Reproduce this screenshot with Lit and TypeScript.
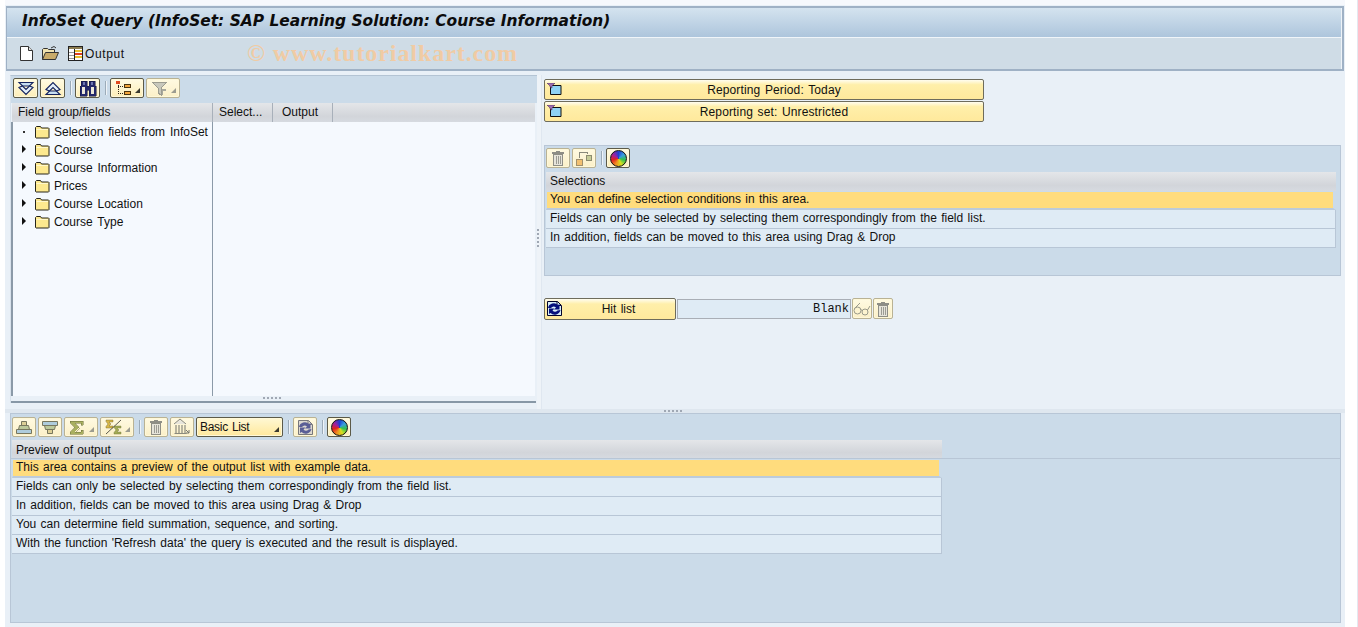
import { LitElement, html, css, svg } from "lit";
import { customElement } from "lit/decorators.js";

const ic = (w: number, h: number, body: unknown, cls = "") =>
  html`<svg class="ic ${cls}" width=${w} height=${h} viewBox="0 0 ${w} ${h}" shape-rendering="crispEdges">${body}</svg>`;

const folder = () => html`<svg class="ic" width="16" height="14" viewBox="0 0 16 14">
  <path d="M1.500 12.500V2.500l1-1h4l1 1.500h7l.5.5v9l-.5.5h-12.500z" fill="#fde98f" stroke="#26241a" stroke-width="1"/>
  <path d="M2.500 4.500h11.500" stroke="#fff8cc" stroke-width="1"/></svg>`;

const trash = () => ic(16, 16, svg`
  <path d="M2 3h12" stroke="#8e8e86" stroke-width="2"/>
  <path d="M6 1h4v1H6z" fill="#8e8e86"/>
  <path d="M3.500 4.500h9v10.500h-9z" fill="#e6e4da" stroke="#8e8e86"/>
  <path d="M6 6v8M8 6v8M10 6v8" stroke="#9c9c94"/>`);

const wheel = () => html`<span class="wheel"></span>`;

const expand = (up: boolean) => html`<svg class="ic" width="18" height="15" viewBox="0 0 18 15">
  <g transform=${up ? "translate(0 15) scale(1 -1)" : ""} fill="#c8dff2" stroke="#14235e" stroke-width="1.100">
    <path d="M2 1.500h14l-3.500 3.500h-7z"/>
    <path d="M2 6.500l7 7 7-7-3.500-1.500-3.500 3.500-3.500-3.500z" fill="#e4effa"/>
  </g></svg>`;

const binoc = () => ic(18, 17, svg`
  <path d="M2 1h6v5h2V1h6v5h1v10h-7V10H8v6H1V6h1z" fill="#23286a" stroke="#10123a" stroke-width="0.500"/>
  <path d="M3 7h3v7H3zM12 7h3v7h-3z" fill="#ece8d8"/>
  <path d="M4 2h2v3H4zM12 2h2v3h-2z" fill="#6c74b0"/>`);

const tree = () => ic(18, 15, svg`
  <path d="M3 2v11M3 5h7M3 12h7" stroke="#30261a" stroke-dasharray="1 1" fill="none"/>
  <path d="M1 0h4v3H1z" fill="#e04a20"/>
  <path d="M9.500 3.500h6v3h-6zM9.500 10.500h6v3h-6z" fill="#f4a63a" stroke="#4a3410"/>`);

const funnel = () => ic(18, 15, svg`
  <path d="M1 1h15l-6 6v7l-3-2V7z" fill="#c8c8bc" stroke="#9c9c90"/>
  <path d="M11 8h4v2h-4zM11 8h1v6h-1z" fill="#a8a89c"/>`);

const moveIc = () => ic(18, 16, svg`
  <path d="M1.500 9.500h6v6h-6z" fill="#f2c070" stroke="#a0906c"/>
  <path d="M11.500 5.500h5v5h-5z" fill="#c6cc98" stroke="#8c8c70"/>
  <path d="M4 8V2h8v2" stroke="#8a8a7c" fill="none"/>`);

const report = () => html`<svg class="ic rep" width="15" height="12" viewBox="0 0 15 12">
  <path d="M3.500 2.500h10.500v9H3.500z" fill="#8fd2f4" stroke="#111"/>
  <path d="M0 0h8L5 3v2L3 4V3z" fill="#9c6cb0" stroke="#3c2048" stroke-width="0.500"/></svg>`;

const refresh = (dim = false) => {
  const dark = dim ? "#5a5e96" : "#06107c";
  const paper = dim ? "#ddd9d0" : "#d8eef8";
  const line = dim ? "#77777c" : "#03032c";
  return html`<svg class="ic" width="17" height="17" viewBox="0 0 17 17">
    <path d="M1.500 1.500h10l4 4v10h-14z" fill=${paper} stroke=${line}/>
    <path d="M11 1.500v4h4" fill="none" stroke=${line}/>
    <path d="M2 8a6 6 0 0 1 10-3l1.500-1v5.500H8l2-2a3.500 3.500 0 0 0-5 .5z" fill=${dark}/>
    <path d="M14.500 10a6 6 0 0 1-10 3L3 14V8.500h5.500l-2 2a3.500 3.500 0 0 0 5 0z" fill=${dark}/>
  </svg>`;
};

const stack = (flip: boolean) => html`<svg class="ic" width="16" height="15" viewBox="0 0 16 15">
  <g transform=${flip ? "translate(0 15) scale(1 -1)" : ""} stroke="#77775e">
    <path d="M5.500 1.500h5v4h-5z" fill="#dccf96"/>
    <path d="M3.500 5.500h9l1 4h-11z" fill="#bcc99a"/>
    <path d="M.500 9.500h15v4H.500z" fill="#aeccdc"/>
  </g></svg>`;

const sigma = () => ic(16, 15, svg`
  <path d="M1 1h13v4h-2V3H6l4 4.500L6 12h6v-2h2v4H1v-2l5-4.500L1 3z" fill="#a9b060" stroke="#6a6e3c" stroke-width="0.500"/>`);

const sigma2 = () => html`<svg class="ic" width="17" height="16" viewBox="0 0 17 16">
  <path d="M1 1h7v2H4l2 2-2 2h4v2H1V7.500L3 5 1 2.500z" fill="#d8b848" stroke="#6a5a2c" stroke-width=".4"/>
  <path d="M9 7h7v2h-4l2 2-2 2h4v2H9v-1.500l2-2.500-2-2.500z" fill="#a4ac54" stroke="#6a6e3c" stroke-width=".4"/>
  <path d="M1 15L16 1" stroke="#5c5c50" stroke-width="1"/></svg>`;

const layoutIc = () => html`<svg class="ic" width="18" height="18" viewBox="0 0 18 18">
  <path d="M1 6l6-5 6 5" fill="#e8e6dc" stroke="#8a8a7e"/>
  <path d="M3 7v8M6 7v8M9 7v8M12 7v8" stroke="#8a8a7e" stroke-width="1.200"/>
  <path d="M1.500 15.500h12" stroke="#8a8a7e"/>
  <path d="M13 12l3 3m0-3v3h-3" fill="none" stroke="#77776c"/></svg>`;

const glasses = () => html`<svg class="ic" width="18" height="14" viewBox="0 0 18 14">
  <g fill="#fdf4d0" stroke="#9a9a8a">
    <ellipse cx="4.500" cy="8.500" rx="3.500" ry="3.500"/>
    <ellipse cx="12" cy="10" rx="3" ry="3"/>
    <path d="M7.500 7.500l2 1M1.500 6.500L7 1M14.500 8L17 4" fill="none"/>
  </g></svg>`;

const arrow = () => html`<span class="arrow"></span>`;

const treeItems = ["Selection fields from InfoSet", "Course", "Course Information", "Prices", "Course Location", "Course Type"];
const selRows = [
  "You can define selection conditions in this area.",
  "Fields can only be selected by selecting them correspondingly from the field list.",
  "In addition, fields can be moved to this area using Drag & Drop",
];
const prevRows = [
  "This area contains a preview of the output list with example data.",
  "Fields can only be selected by selecting them correspondingly from the field list.",
  "In addition, fields can be moved to this area using Drag & Drop",
  "You can determine field summation, sequence, and sorting.",
  "With the function 'Refresh data' the query is executed and the result is displayed.",
];

@customElement("app-root")
export class AppRoot extends LitElement {
  static styles = css`
    :host {
      display: block;
      width: 1358px;
      height: 627px;
      overflow: hidden;
      background: #fff;
      font: 12px "Liberation Sans", Arial, sans-serif;
      word-spacing: 1px;
      color: #111;
    }
    * { box-sizing: border-box; }
    .ic { display: block; flex: none; }
    .shell { width: 1358px; height: 627px; border-right: 1px solid #e4e8f0; }
    .main {
      width: 1340px; height: 627px; margin-left: 5px; padding: 1px 1px 0;
      background: linear-gradient(#f6f8fc 0 5px, #e9f0f7 5px);
      display: flex; flex-direction: column;
    }
    .frame {
      margin-top: 5px; height: 65px; width: 1338px; flex: none;
      border: 2px solid #9fb1c5; border-left-width: 1px; position: relative;
      display: flex; flex-direction: column; background: #f0f5f9;
    }
    .title {
      height: 29px; flex: none; padding: 0 0 0 15px;
      background: linear-gradient(#d4e3ef, #adc5dc);
      font: italic bold 15.45px "DejaVu Sans", sans-serif;
      word-spacing: 0; line-height: 27px; color: #0c0c0c;
      border-right: 1px solid #eef3f8;
    }
    .appbar {
      margin-top: 1px; flex: 1; background: #cfdce6; display: flex; align-items: center;
      padding: 0 0 0 13px; border-right: 1px solid #eef3f8;
    }
    .appbar .doc { margin-right: 9px; }
    .appbar .open { margin-right: 9px; }
    .appbar span.lbl { margin-left: 2px; letter-spacing: .6px; }
    .watermark {
      position: absolute; left: 240px; top: 30px;
      font: bold 24px "Liberation Serif", serif; word-spacing: 0; letter-spacing: .93px;
      color: #f0cba4; line-height: 30px;
    }
    .mid { display: flex; flex: none; height: 334px; margin-top: 4px; }
    .left {
      width: 527px; height: 328px; margin-left: 4px; flex: none;
      display: flex; flex-direction: column; background: #e9f0f7;
      border-top: 1px solid #b4c4d4; border-left: 1px solid #d8e2ec;
      position: relative;
    }
    .toolbar { display: flex; align-items: flex-start; flex: none; }
    .left .toolbar { height: 27px; background: #cbdbe9; padding: 2px 0 0 2px; width: 526px; }
    .tb {
      height: 20px; width: 24px; flex: none; display: flex; align-items: center; justify-content: center;
      background: linear-gradient(#fffbe4, #fdeeb8);
      border: 1px solid #8c886c; border-radius: 2px; margin-right: 2px; position: relative;
      box-shadow: inset 0 0 0 1px #fff8d8;
    }
    .left .tb { width: 25px; }
    .left .tb.wide, .tb.wide { width: 34px; justify-content: flex-start; padding-left: 4px; }
    .tb.off { border-color: #b9b294; background: linear-gradient(#fffae2, #fbf0c8); }
    .tb.dark { border-color: #5c5a48; }
    .arrow {
      position: absolute; right: 3px; bottom: 4px; width: 0; height: 0;
      border-left: 5px solid transparent; border-bottom: 5px solid #3a3a30;
    }
    .off .arrow { border-bottom-color: #9c9c90; }
    .sep { width: 1px; height: 14px; background: #9cabb8; margin: 3px 4px 0 3px; flex: none; box-shadow: 1px 0 0 #eef3f8; }
    .hdr {
      height: 19px; flex: none; display: flex; line-height: 19px;
      background: linear-gradient(#e4e6e9, #d2d5da 70%, #d6dae0);
    }
    .left .hdr { margin-left: 1px; width: 523px; }
    .hdr span { padding-left: 6px; border-right: 1px solid #a8b0ba; }
    .c1 { width: 201px; }
    .c2 { width: 60px; }
    .c3 { width: 60px; padding-left: 9px !important; }
    .treebody {
      flex: none; height: 274px; width: 524px; display: flex; background: #f5f9fe;
      border-left: 2px solid #8b9aa8;
    }
    .treecol { width: 200px; border-right: 1px solid #8b9aa8; padding-top: 1px; flex: none; }
    .titem { height: 18px; display: flex; align-items: center; white-space: nowrap; width: 210px; }
    .tg { width: 21px; flex: none; display: flex; justify-content: center; }
    .tri { width: 0; height: 0; border-left: 4px solid #111; border-top: 4px solid transparent; border-bottom: 4px solid transparent; margin-top: -3px; }
    .dot { width: 2px; height: 2px; background: #333; margin-top: -1px; }
    .titem .ic { margin-right: 4px; margin-top: -1px; }
    .titem span:last-child { word-spacing: 1.5px; }
    .sash { flex: none; height: 7px; width: 525px; border-bottom: 2px solid #8797a6; position: relative; }
    .dotsh {
      position: absolute; left: 252px; top: 1px; width: 18px; height: 2px;
      background: repeating-linear-gradient(90deg, #a0a8b4 0 2px, transparent 2px 4px);
    }
    .vsplit { width: 4px; height: 334px; flex: none; margin-left: 0; position: relative; background: #eef3f8; }
    .dotsv {
      position: absolute; left: 0; top: 154px; width: 2px; height: 18px;
      background: repeating-linear-gradient(#a0a8b4 0 2px, transparent 2px 4px);
    }
    .right { flex: 1; padding: 4px 0 0 2px; display: flex; flex-direction: column; border-left: 1px solid #dfe7f0; }
    .big {
      width: 440px; height: 21px; flex: none; display: flex; align-items: center; position: relative;
      background: linear-gradient(#fffdf0, #ffefaa 25%, #ffe99c);
      border: 1px solid #6e6c5c; border-radius: 2px; margin-bottom: 1px; padding-left: 20px;
      justify-content: center; letter-spacing: .14px;
    }
    .big .rep { position: absolute; left: 2px; top: 3px; }
    .hit .ic { position: absolute; left: 1px; top: 1px; }
    .panel {
      background: #cbdbe9; border: 1px solid #b8c6d6;
    }
    .sel { margin-top: 22px; width: 797px; height: 131px; flex: none; }
    .sel .toolbar { height: 25px; padding: 2px 0 0 1px; }
    .sel .hdr { margin: 1px 0 0 1px; width: 790px; }
    .sel .hdr span { padding-left: 4px; }
    .hdr .plain { border: 0; }
    .rows { display: flex; flex-direction: column; }
    .sel .rows { margin-left: 1px; width: 790px; }
    .row {
      height: 19px; line-height: 17px; padding-left: 4px; background: #dfebf5;
      border: 1px solid #b8c6d6; border-top: 0; border-left: 0; white-space: nowrap;
    }
    .row.cur {
      background: #ffdc7d; padding-left: 3px; line-height: 14px;
      border: 0 solid #cbdbe9; border-width: 1px 3px 0 1px;
      border-bottom: 2px solid #bccbdb;
    }
    .hitrow { display: flex; margin-top: 22px; flex: none; align-items: flex-start; }
    .hit {
      width: 132px; height: 22px; position: relative; display: flex; align-items: center; justify-content: center;
      background: linear-gradient(#fffdf0, #ffefaa 25%, #ffe99c); border: 1px solid #6e6c5c; border-radius: 2px;
      padding-left: 17px;
    }
    .blank {
      width: 174px; height: 20px; margin: 1px 1px 0; background: #dfebf5; border: 1px solid #a9aeb6;
      font: 12px "Liberation Mono", monospace; word-spacing: 0; text-align: right; padding-right: 1px; line-height: 18px;
    }
    .tb.sq { width: 20px; height: 21px; margin: 0 1px 0 0; }
    .hsplit { height: 4px; flex: none; background: #dfe7ef; margin-left: -1px; width: 1340px; position: relative; }
    .dotsb {
      position: absolute; left: 659px; top: 1px; width: 18px; height: 2px;
      background: repeating-linear-gradient(90deg, #a0a8b4 0 2px, transparent 2px 4px);
    }
    .bottom { margin-left: 4px; width: 1331px; height: 210px; flex: none; position: relative; }
    .bottom .toolbar { height: 25px; padding: 3px 0 0 1px; }
    .bottom .hdr { margin: 1px 0 0 1px; width: 930px; height: 18px; line-height: 20px; }
    .bottom .hdr span { padding-left: 4px; }
    .rule { height: 1px; background: #b8c6d6; }
    .bottom .rows { margin-left: 1px; width: 930px; }
    .bottom .tb.list {
      height: 20px; width: 87px; justify-content: flex-start; padding-left: 3px; letter-spacing: -.3px;
      border-color: #5c5a48; background: linear-gradient(#fff8d4, #ffe89c);
    }
    .wheel {
      width: 17px; height: 17px; border-radius: 50%; border: 1.500px solid #111; display: block;
      background: conic-gradient(#1d3fd0, #3a9ce0, #30c050, #d8e020, #f09020, #e02020, #a020a0, #1d3fd0);
    }
  `;

  render() {
    return html`<div class="shell"><div class="main">
      <div class="frame">
        <div class="title">InfoSet Query (InfoSet: SAP Learning Solution: Course Information)</div>
        <div class="appbar">
          <svg class="ic doc" width="13" height="15" viewBox="0 0 13 15"><path d="M.500.500h8l4 4v10H.500z" fill="#fff" stroke="#333"/><path d="M8.500.500v4h4" fill="#e0e0e0" stroke="#333"/></svg>
          <svg class="ic open" width="17" height="15" viewBox="0 0 17 15"><path d="M.500 13.500v-10l1-1h4l1 1h6v3" fill="#efe2b0" stroke="#333"/><path d="M.500 13.500l3-7h13l-3 7z" fill="#c9ab6a" stroke="#333"/><path d="M9 2l3-1.500 2 1.500" fill="none" stroke="#333"/></svg>
          <svg class="ic" width="15" height="15" viewBox="0 0 15 15" shape-rendering="crispEdges"><path d="M.500.500h14v14H.500z" fill="#fff" stroke="#222"/><path d="M1 1h13v2H1z" fill="#8c7c50"/><path d="M7 4h7v2H7z" fill="#e8c030"/><path d="M7 7h7v2H7z" fill="#e04020"/><path d="M7 10h7v2H7z" fill="#e8c030"/><path d="M6.500 3v11" stroke="#222"/><path d="M1 6.500h5M1 9.500h5M1 12.500h5" stroke="#999"/></svg>
          <span class="lbl">Output</span>
        </div>
        <div class="watermark">© www.tutorialkart.com</div>
      </div>

      <div class="mid">
        <div class="left">
          <div class="toolbar">
            <div class="tb dark">${expand(false)}</div>
            <div class="tb dark">${expand(true)}</div>
            <i class="sep"></i>
            <div class="tb dark">${binoc()}</div>
            <i class="sep"></i>
            <div class="tb dark wide">${tree()}${arrow()}</div>
            <div class="tb off wide">${funnel()}${arrow()}</div>
          </div>
          <div class="hdr">
            <span class="c1">Field group/fields</span><span class="c2">Select...</span><span class="c3">Output</span>
          </div>
          <div class="treebody">
            <div class="treecol">
              ${treeItems.map((t, i) => html`<div class="titem"><span class="tg"><i class=${i === 0 ? "dot" : "tri"}></i></span>${folder()}<span>${t}</span></div>`)}
            </div>
          </div>
          <div class="sash"><i class="dotsh"></i></div>
        </div>
        <div class="vsplit"><i class="dotsv"></i></div>
        <div class="right">
          <div class="big">${report()}<span>Reporting Period: Today</span></div>
          <div class="big">${report()}<span>Reporting set: Unrestricted</span></div>
          <div class="panel sel">
            <div class="toolbar">
              <div class="tb off">${trash()}</div>
              <div class="tb off">${moveIc()}</div>
              <i class="sep"></i>
              <div class="tb dark">${wheel()}</div>
            </div>
            <div class="hdr"><span class="plain">Selections</span></div>
            <div class="rows">
              ${selRows.map((t, i) => html`<div class="row ${i === 0 ? "cur" : ""}">${t}</div>`)}
            </div>
          </div>
          <div class="hitrow">
            <div class="hit">${refresh()}<span>Hit list</span></div>
            <div class="blank">Blank</div>
            <div class="tb off sq">${glasses()}</div>
            <div class="tb off sq">${trash()}</div>
          </div>
        </div>
      </div>

      <div class="hsplit"><i class="dotsb"></i></div>

      <div class="panel bottom">
        <div class="toolbar">
          <div class="tb off">${stack(false)}</div>
          <div class="tb off">${stack(true)}</div>
          <div class="tb off wide">${sigma()}${arrow()}</div>
          <div class="tb off wide">${sigma2()}${arrow()}</div>
          <i class="sep"></i>
          <div class="tb off">${trash()}</div>
          <div class="tb off">${layoutIc()}</div>
          <div class="tb list"><span>Basic List</span>${arrow()}</div>
          <i class="sep"></i>
          <div class="tb off">${refresh(true)}</div>
          <i class="sep"></i>
          <div class="tb dark">${wheel()}</div>
        </div>
        <div class="hdr"><span class="plain">Preview of output</span></div>
        <div class="rule"></div>
        <div class="rows">
          ${prevRows.map((t, i) => html`<div class="row ${i === 0 ? "cur" : ""}">${t}</div>`)}
        </div>
      </div>
    </div></div>`;
  }
}
